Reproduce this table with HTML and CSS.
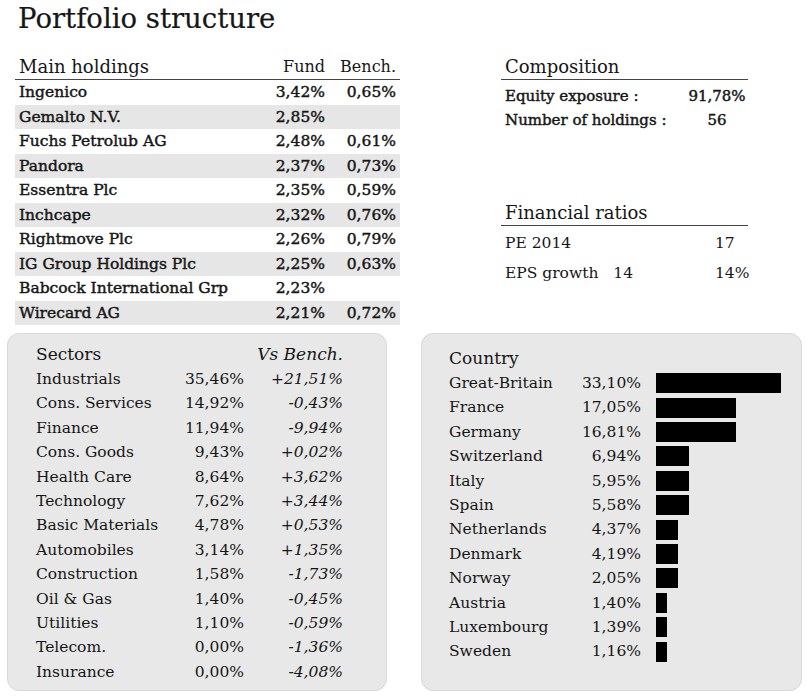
FILE: index.html
```html
<!DOCTYPE html>
<html>
<head>
<meta charset="utf-8">
<link rel="stylesheet" href="styles.css">
</head>
<body>
<h1 class="title">Portfolio structure</h1>
<div class="top">
  <div class="holdings">
    <div class="hrow head"><span class="name">Main holdings</span><span class="fund">Fund</span><span class="bench">Bench.</span></div>
    <div class="hrow"><span class="name">Ingenico</span><span class="fund">3,42%</span><span class="bench">0,65%</span></div>
    <div class="hrow alt"><span class="name">Gemalto N.V.</span><span class="fund">2,85%</span><span class="bench"></span></div>
    <div class="hrow"><span class="name">Fuchs Petrolub AG</span><span class="fund">2,48%</span><span class="bench">0,61%</span></div>
    <div class="hrow alt"><span class="name">Pandora</span><span class="fund">2,37%</span><span class="bench">0,73%</span></div>
    <div class="hrow"><span class="name">Essentra Plc</span><span class="fund">2,35%</span><span class="bench">0,59%</span></div>
    <div class="hrow alt"><span class="name">Inchcape</span><span class="fund">2,32%</span><span class="bench">0,76%</span></div>
    <div class="hrow"><span class="name">Rightmove Plc</span><span class="fund">2,26%</span><span class="bench">0,79%</span></div>
    <div class="hrow alt"><span class="name">IG Group Holdings Plc</span><span class="fund">2,25%</span><span class="bench">0,63%</span></div>
    <div class="hrow"><span class="name">Babcock International Grp</span><span class="fund">2,23%</span><span class="bench"></span></div>
    <div class="hrow alt"><span class="name">Wirecard AG</span><span class="fund">2,21%</span><span class="bench">0,72%</span></div>
  </div>
  <div class="side">
    <div class="sec-head">Composition</div>
    <div class="comp">
      <div class="crow"><span class="clabel">Equity exposure :</span><span class="cval">91,78%</span></div>
      <div class="crow"><span class="clabel">Number of holdings :</span><span class="cval">56</span></div>
    </div>
    <div class="sec-head ratios-head">Financial ratios</div>
    <div class="ratios">
      <div class="rrow"><span class="rlabel">PE 2014</span><span class="rval">17</span></div>
      <div class="rrow"><span class="rlabel">EPS growth <span class="yr">14</span></span><span class="rval">14%</span></div>
    </div>
  </div>
</div>
<div class="bottom">
  <div class="box sectors">
    <div class="srow shead"><span>Sectors</span><span></span><span class="vs">Vs Bench.</span></div>
    <div class="srow"><span>Industrials</span><span class="num">35,46%</span><span class="vs">+21,51%</span></div>
    <div class="srow"><span>Cons. Services</span><span class="num">14,92%</span><span class="vs">-0,43%</span></div>
    <div class="srow"><span>Finance</span><span class="num">11,94%</span><span class="vs">-9,94%</span></div>
    <div class="srow"><span>Cons. Goods</span><span class="num">9,43%</span><span class="vs">+0,02%</span></div>
    <div class="srow"><span>Health Care</span><span class="num">8,64%</span><span class="vs">+3,62%</span></div>
    <div class="srow"><span>Technology</span><span class="num">7,62%</span><span class="vs">+3,44%</span></div>
    <div class="srow"><span>Basic Materials</span><span class="num">4,78%</span><span class="vs">+0,53%</span></div>
    <div class="srow"><span>Automobiles</span><span class="num">3,14%</span><span class="vs">+1,35%</span></div>
    <div class="srow"><span>Construction</span><span class="num">1,58%</span><span class="vs">-1,73%</span></div>
    <div class="srow"><span>Oil &amp; Gas</span><span class="num">1,40%</span><span class="vs">-0,45%</span></div>
    <div class="srow"><span>Utilities</span><span class="num">1,10%</span><span class="vs">-0,59%</span></div>
    <div class="srow"><span>Telecom.</span><span class="num">0,00%</span><span class="vs">-1,36%</span></div>
    <div class="srow"><span>Insurance</span><span class="num">0,00%</span><span class="vs">-4,08%</span></div>
  </div>
  <div class="box country">
    <div class="chead">Country</div>
    <div class="krow"><span>Great-Britain</span><span class="num">33,10%</span><span class="bar" style="width:125px"></span></div>
    <div class="krow"><span>France</span><span class="num">17,05%</span><span class="bar" style="width:80px"></span></div>
    <div class="krow"><span>Germany</span><span class="num">16,81%</span><span class="bar" style="width:80px"></span></div>
    <div class="krow"><span>Switzerland</span><span class="num">6,94%</span><span class="bar" style="width:33px"></span></div>
    <div class="krow"><span>Italy</span><span class="num">5,95%</span><span class="bar" style="width:33px"></span></div>
    <div class="krow"><span>Spain</span><span class="num">5,58%</span><span class="bar" style="width:33px"></span></div>
    <div class="krow"><span>Netherlands</span><span class="num">4,37%</span><span class="bar" style="width:22px"></span></div>
    <div class="krow"><span>Denmark</span><span class="num">4,19%</span><span class="bar" style="width:22px"></span></div>
    <div class="krow"><span>Norway</span><span class="num">2,05%</span><span class="bar" style="width:22px"></span></div>
    <div class="krow"><span>Austria</span><span class="num">1,40%</span><span class="bar" style="width:11px"></span></div>
    <div class="krow"><span>Luxembourg</span><span class="num">1,39%</span><span class="bar" style="width:11px"></span></div>
    <div class="krow"><span>Sweden</span><span class="num">1,16%</span><span class="bar" style="width:11px"></span></div>
  </div>
</div>
</body>
</html>
```
FILE: styles.css
```css
html, body {
  margin: 0;
  padding: 0;
  background: #ffffff;
}
body {
  width: 808px;
  height: 700px;
  font-family: "DejaVu Serif", "Liberation Serif", serif;
  color: #161616;
  font-size: 15.5px;
}
.title {
  margin: 0;
  padding: 0 0 0 18px;
  font-size: 27.5px;
  font-weight: normal;
  line-height: 36px;
  height: 55px;
  -webkit-text-stroke: 0.2px #161616;
}
.top {
  display: flex;
  align-items: flex-start;
}
.holdings {
  margin-left: 15px;
  width: 385px;
}
.hrow {
  display: grid;
  grid-template-columns: 1fr 60px 75px;
  height: 24.5px;
  line-height: 24.5px;
  font-size: 15.5px;
  -webkit-text-stroke: 0.45px #161616;
}
.hrow.head {
  font-size: 16px;
  height: 24px;
  line-height: 24px;
  border-bottom: 1px solid #444;
  -webkit-text-stroke: 0;
}
.hrow.head .name {
  font-size: 18px;
}
.hrow.alt {
  background: #e6e6e6;
}
.name {
  padding-left: 4px;
  white-space: nowrap;
}
.fund, .bench {
  text-align: right;
}
.bench {
  padding-right: 4px;
}
.side {
  margin-left: 101px;
  width: 247px;
}
.sec-head {
  font-size: 18px;
  height: 24px;
  line-height: 24px;
  padding-left: 4px;
  border-bottom: 1px solid #444;
}
.comp {
  margin-top: 4px;
}
.crow {
  display: grid;
  grid-template-columns: 1fr 62px;
  height: 24px;
  line-height: 24px;
  font-size: 15px;
  padding-left: 4px;
  white-space: nowrap;
  -webkit-text-stroke: 0.45px #161616;
}
.cval {
  text-align: center;
}
.ratios-head {
  margin-top: 69px;
}
.ratios {
  margin-top: 2px;
}
.rrow {
  display: grid;
  grid-template-columns: 1fr 33px;
  height: 30px;
  line-height: 30px;
  padding-left: 4px;
}
.yr {
  margin-left: 10px;
}
.bottom {
  display: flex;
  margin-top: 8px;
  padding-left: 7px;
  gap: 34px;
}
.box {
  background: #e8e8e8;
  border: 1px solid #d9d9d9;
  border-radius: 12px;
  box-sizing: border-box;
}
.sectors {
  width: 380px;
  height: 358px;
  padding: 7px 0 0 28px;
}
.srow {
  display: grid;
  grid-template-columns: 134px 74px 99px;
  height: 24.4px;
  line-height: 24.4px;
}
.srow.shead {
  height: 26px;
  line-height: 26px;
  font-size: 17px;
}
.num {
  text-align: right;
}
.vs {
  text-align: right;
  font-style: italic;
}
.country {
  width: 381px;
  height: 358px;
  padding: 12px 0 0 27px;
}
.chead {
  font-size: 17px;
  height: 25px;
  line-height: 25px;
}
.krow {
  display: grid;
  grid-template-columns: 131px 61px auto;
  align-items: center;
  height: 24.4px;
  line-height: 24.4px;
}
.bar {
  display: block;
  height: 20px;
  margin-left: 15px;
  background: #000;
}
```
